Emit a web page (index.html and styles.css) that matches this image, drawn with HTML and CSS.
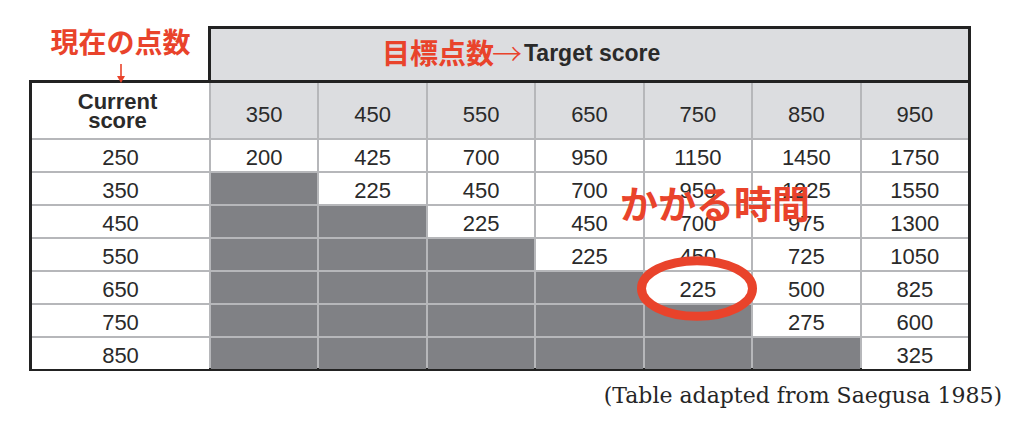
FILE: index.html
```html
<!DOCTYPE html>
<html lang="ja">
<head>
<meta charset="utf-8">
<title>Score table</title>
<link rel="stylesheet" href="styles.css">
</head>
<body>
<div class="page">
  <div class="top">
    <div class="label-now">
      <span class="jp-now">現在の点数</span>
      <svg class="down" width="10" height="19" viewBox="0 0 10 19"><line x1="5" y1="0" x2="5" y2="13" stroke="#e9432b" stroke-width="1.6"/><path d="M1 12 L9 12 L5 19 Z" fill="#e9432b"/></svg>
    </div>
    <div class="target-band">
      <span class="jp-target">目標点数</span><span class="arrow">→</span><span class="en-target">Target score</span>
    </div>
  </div>
  <div class="table-wrap">
    <div class="grid">
      <div class="cell corner"><span>Current</span><span>score</span></div>
      <div class="cell head">350</div>
      <div class="cell head">450</div>
      <div class="cell head">550</div>
      <div class="cell head">650</div>
      <div class="cell head">750</div>
      <div class="cell head">850</div>
      <div class="cell head">950</div>

      <div class="cell">250</div>
      <div class="cell">200</div>
      <div class="cell">425</div>
      <div class="cell">700</div>
      <div class="cell">950</div>
      <div class="cell">1150</div>
      <div class="cell">1450</div>
      <div class="cell">1750</div>

      <div class="cell">350</div>
      <div class="cell dark"></div>
      <div class="cell">225</div>
      <div class="cell">450</div>
      <div class="cell">700</div>
      <div class="cell">950</div>
      <div class="cell">1225</div>
      <div class="cell">1550</div>

      <div class="cell">450</div>
      <div class="cell dark"></div>
      <div class="cell dark"></div>
      <div class="cell">225</div>
      <div class="cell">450</div>
      <div class="cell">700</div>
      <div class="cell">975</div>
      <div class="cell">1300</div>

      <div class="cell">550</div>
      <div class="cell dark"></div>
      <div class="cell dark"></div>
      <div class="cell dark"></div>
      <div class="cell">225</div>
      <div class="cell">450</div>
      <div class="cell">725</div>
      <div class="cell">1050</div>

      <div class="cell">650</div>
      <div class="cell dark"></div>
      <div class="cell dark"></div>
      <div class="cell dark"></div>
      <div class="cell dark"></div>
      <div class="cell">225</div>
      <div class="cell">500</div>
      <div class="cell">825</div>

      <div class="cell">750</div>
      <div class="cell dark"></div>
      <div class="cell dark"></div>
      <div class="cell dark"></div>
      <div class="cell dark"></div>
      <div class="cell dark"></div>
      <div class="cell">275</div>
      <div class="cell">600</div>

      <div class="cell">850</div>
      <div class="cell dark"></div>
      <div class="cell dark"></div>
      <div class="cell dark"></div>
      <div class="cell dark"></div>
      <div class="cell dark"></div>
      <div class="cell dark"></div>
      <div class="cell">325</div>
    </div>
    <div class="note-time">かかる時間</div>
    <svg class="ring" width="122" height="65" viewBox="0 0 122 65"><ellipse cx="61" cy="32.5" rx="55.5" ry="27.8" fill="none" stroke="#e9432b" stroke-width="9"/></svg>
  </div>
  <p class="caption">(Table adapted from Saegusa 1985)</p>
</div>
</body>
</html>
```

FILE: styles.css
```css
html, body {
  margin: 0;
  padding: 0;
  background: #ffffff;
}

body {
  font-family: "Liberation Sans", Arial, sans-serif;
  color: #2a2a2a;
  width: 1024px;
  height: 424px;
  overflow: hidden;
}

.page {
  padding-top: 26px;
}

.top {
  position: relative;
  z-index: 1;
  display: flex;
  width: 942px;
  height: 54px;
  margin-left: 29px;
}

.label-now {
  width: 179px;
  flex-shrink: 0;
  display: flex;
  flex-direction: column;
  align-items: center;
}

.jp-now {
  flex-shrink: 0;
  margin-top: 1px;
  font-family: "Noto Sans CJK JP", sans-serif;
  font-weight: 700;
  font-size: 28px;
  line-height: 28px;
  color: #e9432b;
  padding-left: 4px;
}

.down {
  flex-shrink: 0;
  display: block;
  margin-top: 9px;
  margin-left: 4px;
}

.target-band {
  flex: 1;
  box-sizing: border-box;
  height: 54px;
  background: #dcdde0;
  border: 3px solid #222222;
  border-bottom: none;
  display: flex;
  align-items: center;
  padding-left: 171px;
  padding-bottom: 5px;
}

.jp-target {
  font-family: "Noto Sans CJK JP", sans-serif;
  font-weight: 700;
  font-size: 28px;
  color: #e9432b;
  line-height: 1;
}

.arrow {
  font-family: "Noto Sans CJK JP", sans-serif;
  font-weight: 300;
  font-size: 30px;
  color: #e9432b;
  line-height: 1;
  margin-left: -2px;
}

.en-target {
  font-family: "Liberation Sans", Arial, sans-serif;
  font-weight: 700;
  font-size: 23px;
  color: #2a2a2a;
  margin-left: 2px;
  line-height: 1;
  padding-top: 3px;
}

.table-wrap {
  position: relative;
  width: 942px;
  margin-left: 29px;
}

.grid {
  box-sizing: border-box;
  width: 942px;
  height: 291px;
  border: 3px solid #222222;
  background: #b6b7ba;
  display: grid;
  grid-template-columns: 177px repeat(7, 1fr);
  grid-template-rows: 55px repeat(7, 1fr);
  gap: 2px;
}

.cell {
  background: #ffffff;
  display: flex;
  align-items: center;
  justify-content: center;
  font-size: 22px;
  color: #2a2a2a;
  padding-top: 5px;
  box-sizing: border-box;
}

.head {
  background: #dcdde0;
  padding-top: 8px;
}

.dark {
  background: #808185;
}

.corner {
  flex-direction: column;
  font-weight: 700;
  font-size: 22px;
  line-height: 19px;
  padding-top: 1px;
  padding-right: 6px;
}

.note-time {
  position: absolute;
  left: 591px;
  top: 103px;
  font-family: "Noto Sans CJK JP", sans-serif;
  font-weight: 700;
  font-size: 38px;
  line-height: 38px;
  color: #e9432b;
  white-space: nowrap;
}

.ring {
  position: absolute;
  left: 607px;
  top: 176px;
}

.caption {
  margin: 12px 0 0 0;
  padding-right: 22px;
  text-align: right;
  font-family: "DejaVu Serif", "Liberation Serif", serif;
  font-size: 22px;
  line-height: 26px;
  color: #262626;
}
```
